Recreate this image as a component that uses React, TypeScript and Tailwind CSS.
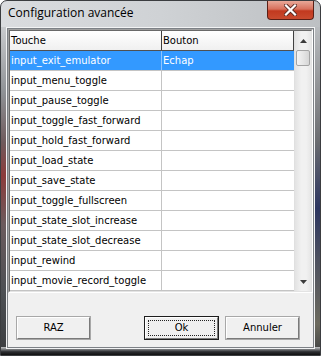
import React from "react";

const rows = [
  "input_exit_emulator",
  "input_menu_toggle",
  "input_pause_toggle",
  "input_toggle_fast_forward",
  "input_hold_fast_forward",
  "input_load_state",
  "input_save_state",
  "input_toggle_fullscreen",
  "input_state_slot_increase",
  "input_state_slot_decrease",
  "input_rewind",
  "input_movie_record_toggle",
];

function Btn({ label, def }: { label: string; def?: boolean }) {
  return (
    <div
      className={
        "w-[75px] h-[24px] " +
        (def ? "border border-[#1e1e1e]" : "border border-[#a8a8a8]")
      }
    >
      <div className="w-full h-full border-t border-l border-t-white border-l-white border-b border-r border-b-[#7a7a7a] border-r-[#7a7a7a] bg-[#f0f0f0] flex items-center justify-center relative">
        {def && (
          <div className="absolute left-[2px] top-[2px] right-[2px] bottom-[2px] border border-dotted border-[#222]" />
        )}
        <span className="text-[10px] text-black leading-none">{label}</span>
      </div>
    </div>
  );
}

export default function App() {
  return (
    <div
      className="w-[321px] h-[356px] relative overflow-hidden rounded-t-[7px] border border-[#3b3d40] bg-[linear-gradient(90deg,#dadcdf_0%,#cfd2d5_50%,#bdc0c3_100%)]"
      style={{ fontFamily: '"DejaVu Sans", Verdana, sans-serif' }}
    >
      {/* side glass streaks */}
      <div className="absolute left-0 top-[26px] w-[6px] h-[330px] bg-[linear-gradient(180deg,#c9cbce_0%,#8e9195_20%,#6f5a5c_35%,#8c3b3b_45%,#6b5b5d_60%,#4d5054_80%,#3a3c3f_100%)]" />
      <div className="absolute right-0 top-[26px] w-[6px] h-[330px] bg-[linear-gradient(180deg,#b9bcbf_0%,#8d8f92_20%,#6a6c70_35%,#2c3560_55%,#4d5160_70%,#6c6a5e_90%,#3a3c3f_100%)]" />
      <div className="absolute left-0 bottom-0 w-full h-[8px] bg-[linear-gradient(180deg,#c4c6c8_0%,#2b2d30_60%,#111_100%)]" />

      {/* title bar */}
      <div className="relative h-[26px] flex items-start">
        <span
          className="ml-[7px] mt-[6px] text-[12px] text-black leading-none"
          style={{ fontFamily: '"Open Sans", "Noto Sans", sans-serif' }}
        >
          Configuration avancée
        </span>
        <div className="absolute left-[266px] top-0 w-[47px] h-[19px] rounded-b-[4px] border border-[#5a1f16] border-t-0 bg-[linear-gradient(180deg,#e9a898_0%,#d8705c_45%,#c2391f_55%,#c94a2e_100%)] flex items-center justify-center">
          <svg width="13" height="12" viewBox="0 0 13 12">
            <path
              d="M2 1.5 L11 10.5 M11 1.5 L2 10.5"
              stroke="#5a2a22"
              strokeWidth="4"
              strokeLinecap="square"
            />
            <path
              d="M2 1.5 L11 10.5 M11 1.5 L2 10.5"
              stroke="#ffffff"
              strokeWidth="2.2"
              strokeLinecap="square"
            />
          </svg>
        </div>
      </div>

      {/* client with frame lines */}
      <div className="relative mx-[5px] border border-[#f2f3f4]">
        <div className="border border-[#7d8186] bg-[#f0f0f0]">
          {/* list view */}
          <div className="w-[305px] h-[264px] border-t border-l border-t-[#a0a0a0] border-l-[#a0a0a0] border-b border-r border-b-white border-r-white">
            <div className="w-full h-full border-t border-l border-t-[#696969] border-l-[#696969] border-b border-r border-b-[#e3e3e3] border-r-[#e3e3e3] flex bg-white">
              <div className="w-[284px] flex flex-col">
                {/* header */}
                <div className="h-[20px] flex bg-[linear-gradient(180deg,#ffffff_0%,#f0f0f0_100%)] border-b border-[#505050] text-[10px] text-black">
                  <div className="w-[152px] border-r border-[#404040] flex items-center pl-[1px]">
                    Touche
                  </div>
                  <div className="flex-1 border-r border-[#404040] flex items-center pl-[1px]">
                    Bouton
                  </div>
                </div>
                {rows.map((r, i) => (
                  <div
                    key={r}
                    className={
                      "h-[20px] flex border-b border-[#c4c4c4] text-[10px] " +
                      (i === 0 ? "bg-[#3399ff] text-white" : "text-[#000]")
                    }
                  >
                    <div
                      className={
                        "w-[152px] flex items-center pl-[1px] border-r " +
                        (i === 0 ? "border-[#8ec4ff]" : "border-[#c4c4c4]")
                      }
                    >
                      {r}
                    </div>
                    <div className="flex-1 flex items-center pl-[1px]">
                      {i === 0 ? "Echap" : ""}
                    </div>
                  </div>
                ))}
              </div>
              {/* scrollbar */}
              <div className="w-[17px] flex flex-col bg-[linear-gradient(90deg,#e3e3e3_0%,#f1f1f1_40%,#f1f1f1_70%,#e6e6e6_100%)] border-l border-[#e0e0e0]">
                <div className="h-[19px] flex items-center justify-center">
                  <svg width="7" height="4" viewBox="0 0 7 4">
                    <path d="M3.5 0 L7 4 L0 4 Z" fill="#3c3c3c" />
                  </svg>
                </div>
                <div className="mx-[1px] h-[16px] rounded-[2px] border border-[#a4a4a4] bg-[linear-gradient(90deg,#f4f4f4_0%,#e6e6e6_50%,#d6d6d6_100%)]" />
                <div className="flex-1" />
                <div className="h-[19px] flex items-center justify-center">
                  <svg width="7" height="4" viewBox="0 0 7 4">
                    <path d="M0 0 L7 0 L3.5 4 Z" fill="#3c3c3c" />
                  </svg>
                </div>
              </div>
            </div>
          </div>
          {/* buttons area */}
          <div className="h-[54px] flex items-start pt-[23px]">
            <div className="ml-[8px]">
              <Btn label="RAZ" />
            </div>
            <div className="ml-[53px]">
              <Btn label="Ok" def />
            </div>
            <div className="ml-[6px]">
              <Btn label="Annuler" />
            </div>
          </div>
        </div>
      </div>
    </div>
  );
}
